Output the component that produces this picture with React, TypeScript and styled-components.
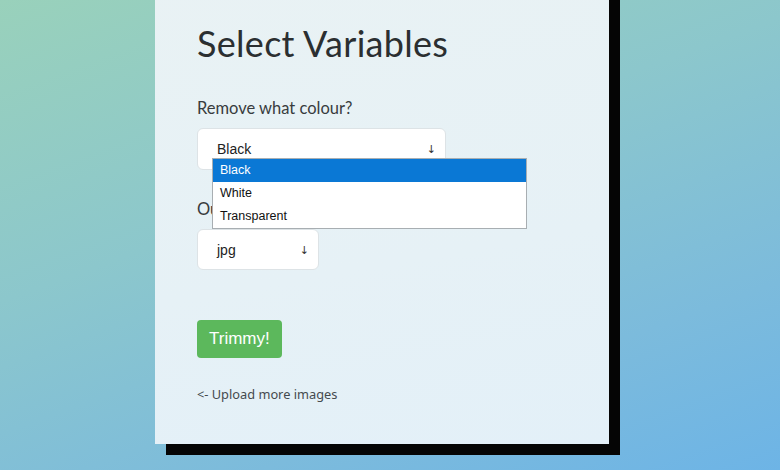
import React from "react";
import styled, { createGlobalStyle } from "styled-components";

const Global = createGlobalStyle`
  html, body { margin: 0; padding: 0; }
  body {
    width: 780px;
    height: 470px;
    overflow: hidden;
    background: linear-gradient(160deg, #99d1bb 0%, #8cc7cc 40%, #7cbbdc 75%, #6db4e6 100%);
  }
`;

const Stage = styled.div`
  width: 780px;
  height: 470px;
  display: flex;
  align-items: flex-end;
  padding-left: 155px;
  padding-bottom: 26px;
  box-sizing: border-box;
`;

const Card = styled.div`
  width: 454px;
  height: 470px;
  box-sizing: border-box;
  background: linear-gradient(170deg, #e9f2f4 0%, #e6f1f6 60%, #e3f0f8 100%);
  box-shadow: 11px 11px 0 #050505;
  padding: 47px 42px 0 42px;
  display: flex;
  flex-direction: column;
  font-family: "Noto Sans", "Open Sans", sans-serif;
  color: #333;
`;

const Title = styled.h1`
  margin: 0;
  font-family: "Lato", "Noto Sans", sans-serif;
  font-weight: 400;
  font-size: 36px;
  line-height: 44px;
  color: #2b2f31;
  letter-spacing: 0.3px;
`;

const Label = styled.div<{ $top: number }>`
  margin-top: ${(p) => p.$top}px;
  font-family: "Lato", "Noto Sans", sans-serif;
  font-size: 16.5px;
  line-height: 20px;
  color: #383c3e;
`;

const SelectWrap = styled.div`
  position: relative;
  margin-top: 10px;
`;

const SelectBox = styled.div<{ $w: number; $h: number }>`
  width: ${(p) => p.$w}px;
  height: ${(p) => p.$h}px;
  box-sizing: border-box;
  background: #fff;
  border: 1px solid #dde3e6;
  border-radius: 6px;
  display: flex;
  align-items: center;
  justify-content: space-between;
  padding: 0 9px 0 19px;
  font-family: "Liberation Sans", Arial, sans-serif;
  font-size: 14px;
  color: #222;
`;

const Arrow = styled.span`
  font-family: "DejaVu Sans", sans-serif;
  font-size: 11px;
  color: #333;
  padding-top: 1px;
`;

const Dropdown = styled.ul`
  position: absolute;
  left: 15px;
  top: 30px;
  width: 315px;
  margin: 0;
  padding: 0;
  list-style: none;
  background: #fff;
  border: 1px solid #a8aeb2;
  box-sizing: border-box;
  z-index: 5;
  font-family: "Liberation Sans", Arial, sans-serif;
  font-size: 12.5px;
`;

const Option = styled.li<{ $active?: boolean }>`
  height: 23px;
  line-height: 23px;
  padding-left: 7px;
  background: ${(p) => (p.$active ? "#0a78d5" : "#fff")};
  color: ${(p) => (p.$active ? "#fff" : "#111")};
`;

const Button = styled.button`
  margin-top: 50px;
  align-self: flex-start;
  height: 38px;
  padding: 0 12px;
  border: none;
  border-radius: 4px;
  background: #5cb85c;
  color: #fff;
  font-family: "Liberation Sans", Arial, sans-serif;
  font-size: 17px;
`;

const BackLink = styled.div`
  margin-top: 27px;
  font-family: "Noto Sans", "Open Sans", sans-serif;
  font-size: 12.8px;
  color: #444a4e;
`;

export default function App() {
  return (
    <>
      <Global />
      <Stage>
        <Card>
          <Title>Select Variables</Title>
          <Label $top={33}>Remove what colour?</Label>
          <SelectWrap>
            <SelectBox $w={249} $h={42}>
              <span>Black</span>
              <Arrow>↓</Arrow>
            </SelectBox>
            <Dropdown>
              <Option $active>Black</Option>
              <Option>White</Option>
              <Option>Transparent</Option>
            </Dropdown>
          </SelectWrap>
          <Label $top={29}>Output format?</Label>
          <SelectWrap>
            <SelectBox $w={122} $h={41}>
              <span>jpg</span>
              <Arrow>↓</Arrow>
            </SelectBox>
          </SelectWrap>
          <Button>Trimmy!</Button>
          <BackLink>&lt;- Upload more images</BackLink>
        </Card>
      </Stage>
    </>
  );
}
